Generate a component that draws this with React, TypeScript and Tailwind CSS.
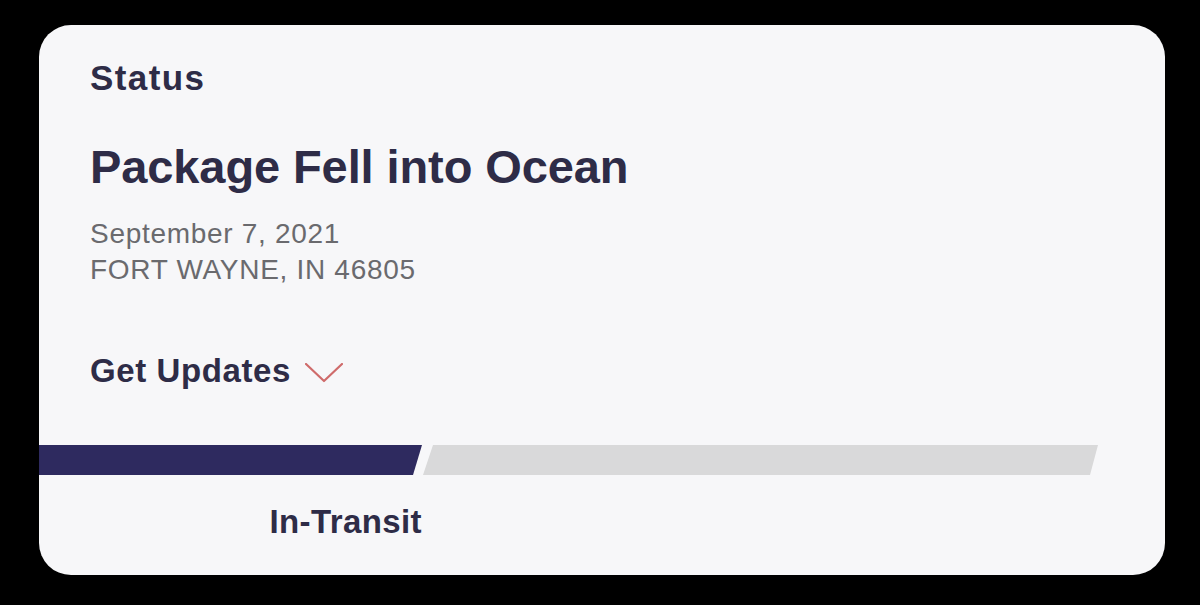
import React from "react";

export default function App() {
  return (
    <div className="w-[1200px] h-[605px] bg-black pt-[25px] pl-[39px] overflow-hidden" style={{ fontFamily: '"Liberation Sans", Arial, sans-serif' }}>
      <div className="w-[1126px] h-[550px] rounded-[32px] bg-[#f7f7f9] overflow-hidden pt-[33px]">
        <div className="pl-[51px]">
          <div className="text-[35px] leading-[40px] font-bold text-[#2e2c47] tracking-[1.4px]">Status</div>
          <div className="mt-[41px] text-[47px] leading-[56px] font-bold text-[#2e2c47] tracking-[-0.1px]">Package Fell into Ocean</div>
          <div className="mt-[21px] text-[28px] leading-[36px] text-[#6a6a6e] tracking-[0.7px]">
            <div>September 7, 2021</div>
            <div>FORT WAYNE, IN 46805</div>
          </div>
          <div className="mt-[63px] flex items-center h-[40px]">
            <span className="text-[33px] leading-[40px] font-bold text-[#2e2c47] tracking-[0.6px]">Get Updates</span>
            <svg className="ml-[14px] mt-[4px]" width="38" height="20" viewBox="0 0 38 20" fill="none">
              <polyline points="1,1 19,18 37,1" stroke="#cf6b6b" strokeWidth="2.2" strokeLinecap="round" strokeLinejoin="round" />
            </svg>
          </div>
        </div>
        <div className="mt-[54px] flex h-[30px]">
          <div className="w-[383px] h-full bg-[#2e2a5f] [clip-path:polygon(0_0,100%_0,calc(100%-9px)_100%,0_100%)]" />
          <div className="ml-[1px] w-[675px] h-full bg-[#d9d9da] [clip-path:polygon(10px_0,100%_0,calc(100%-8px)_100%,0_100%)]" />
        </div>
        <div className="mt-[27px] w-[383px] text-right text-[33px] leading-[40px] font-bold text-[#2e2c47] tracking-[0.4px]">In-Transit</div>
      </div>
    </div>
  );
}
